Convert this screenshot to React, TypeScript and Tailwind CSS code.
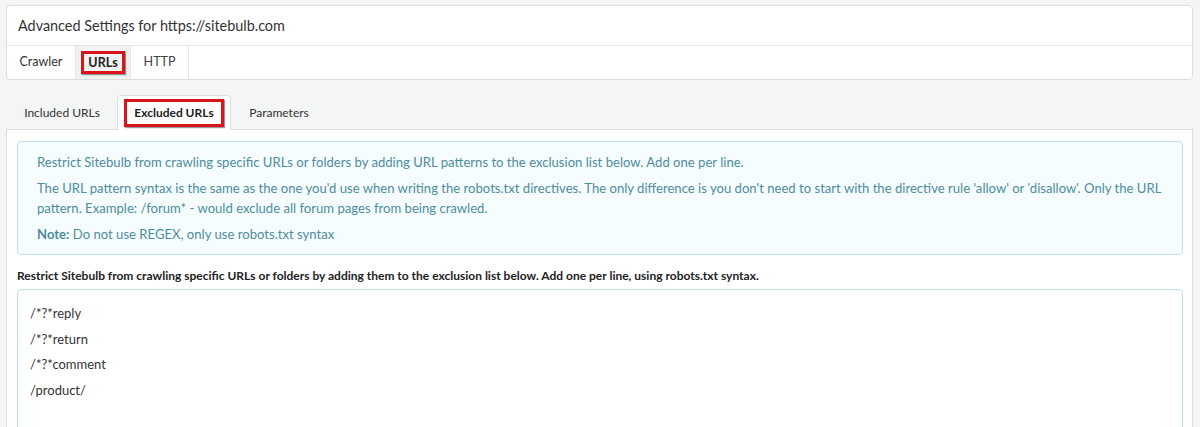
import React from "react";

export default function App() {
  const lines = ["/*?*reply", "/*?*return", "/*?*comment", "/product/"];
  return (
    <div className="w-[1200px] h-[427px] overflow-hidden bg-[#f4f5f5] pt-[5px] px-[6px] text-[#333]" style={{ fontFamily: "Lato, 'Open Sans', sans-serif" }}>
      <div className="w-[1187px] bg-white border border-[#dcdede] rounded-[4px]">
        <div className="h-[40px] flex items-center pl-[11px] text-[14.4px] text-[#333] border-b border-[#e3e5e5]">
          Advanced Settings for https://sitebulb.com
        </div>
        <div className="flex h-[33px] text-[12.5px]">
          <div className="w-[69px] flex items-center justify-center border-r border-[#e3e5e5] text-[#333]">Crawler</div>
          <div className="w-[55px] flex items-center justify-center border-r border-[#e3e5e5] bg-[#f1f2f2]">
            <span className="border-[3px] border-[#d9141b] px-[4px] leading-[15px] py-[1px] font-bold text-[#222] shadow-[1px_1px_1px_rgba(0,0,0,0.4)]">URLs</span>
          </div>
          <div className="w-[58px] flex items-center justify-center border-r border-[#e3e5e5] text-[#444]">HTTP</div>
        </div>
      </div>

      <div className="mt-[14px] flex items-end h-[35px] pl-[1px] text-[12px]">
        <div className="w-[110px] h-[33px] flex items-center justify-center text-[#333]">Included URLs</div>
        <div className="w-[114px] h-[35px] flex items-center justify-center bg-white border border-b-0 border-[#dcdede] rounded-t-[4px] relative top-[1px]">
          <span className="border-[3px] border-[#d9141b] px-[7px] leading-[22px] font-bold text-[#222] shadow-[1px_1px_1px_rgba(0,0,0,0.4)]">Excluded URLs</span>
        </div>
        <div className="w-[96px] h-[33px] flex items-center justify-center text-[#333]">Parameters</div>
      </div>

      <div className="w-[1187px] bg-white border-l border-t border-r border-[#dcdede] pt-[11px] pl-[10px] pr-[9px] h-[400px]">
        <div className="bg-[#f5fdfe] border border-[#bfe0e8] rounded-[4px] pl-[19px] pr-[12px] pt-[10px] pb-[10px] text-[13.1px] text-[#4f8c9d] leading-[20px]">
          <p>Restrict Sitebulb from crawling specific URLs or folders by adding URL patterns to the exclusion list below. Add one per line.</p>
          <p className="mt-[6px]">The URL pattern syntax is the same as the one you'd use when writing the robots.txt directives. The only difference is you don't need to start with the directive rule 'allow' or 'disallow'. Only the URL pattern. Example: /forum* - would exclude all forum pages from being crawled.</p>
          <p className="mt-[6px]"><span className="font-bold">Note:</span> Do not use REGEX, only use robots.txt syntax</p>
        </div>
        <div className="mt-[12px] text-[12px] font-bold text-[#222] leading-[18px]">
          Restrict Sitebulb from crawling specific URLs or folders by adding them to the exclusion list below. Add one per line, using robots.txt syntax.
        </div>
        <div className="mt-[4px] h-[200px] border-[1.5px] border-[#bcdde6] rounded-[4px] pt-[12px] pl-[12px] text-[13px] text-[#333]">
          {lines.map((l) => (
            <div key={l} className="h-[25.5px] leading-[22px]">{l}</div>
          ))}
        </div>
      </div>
    </div>
  );
}
